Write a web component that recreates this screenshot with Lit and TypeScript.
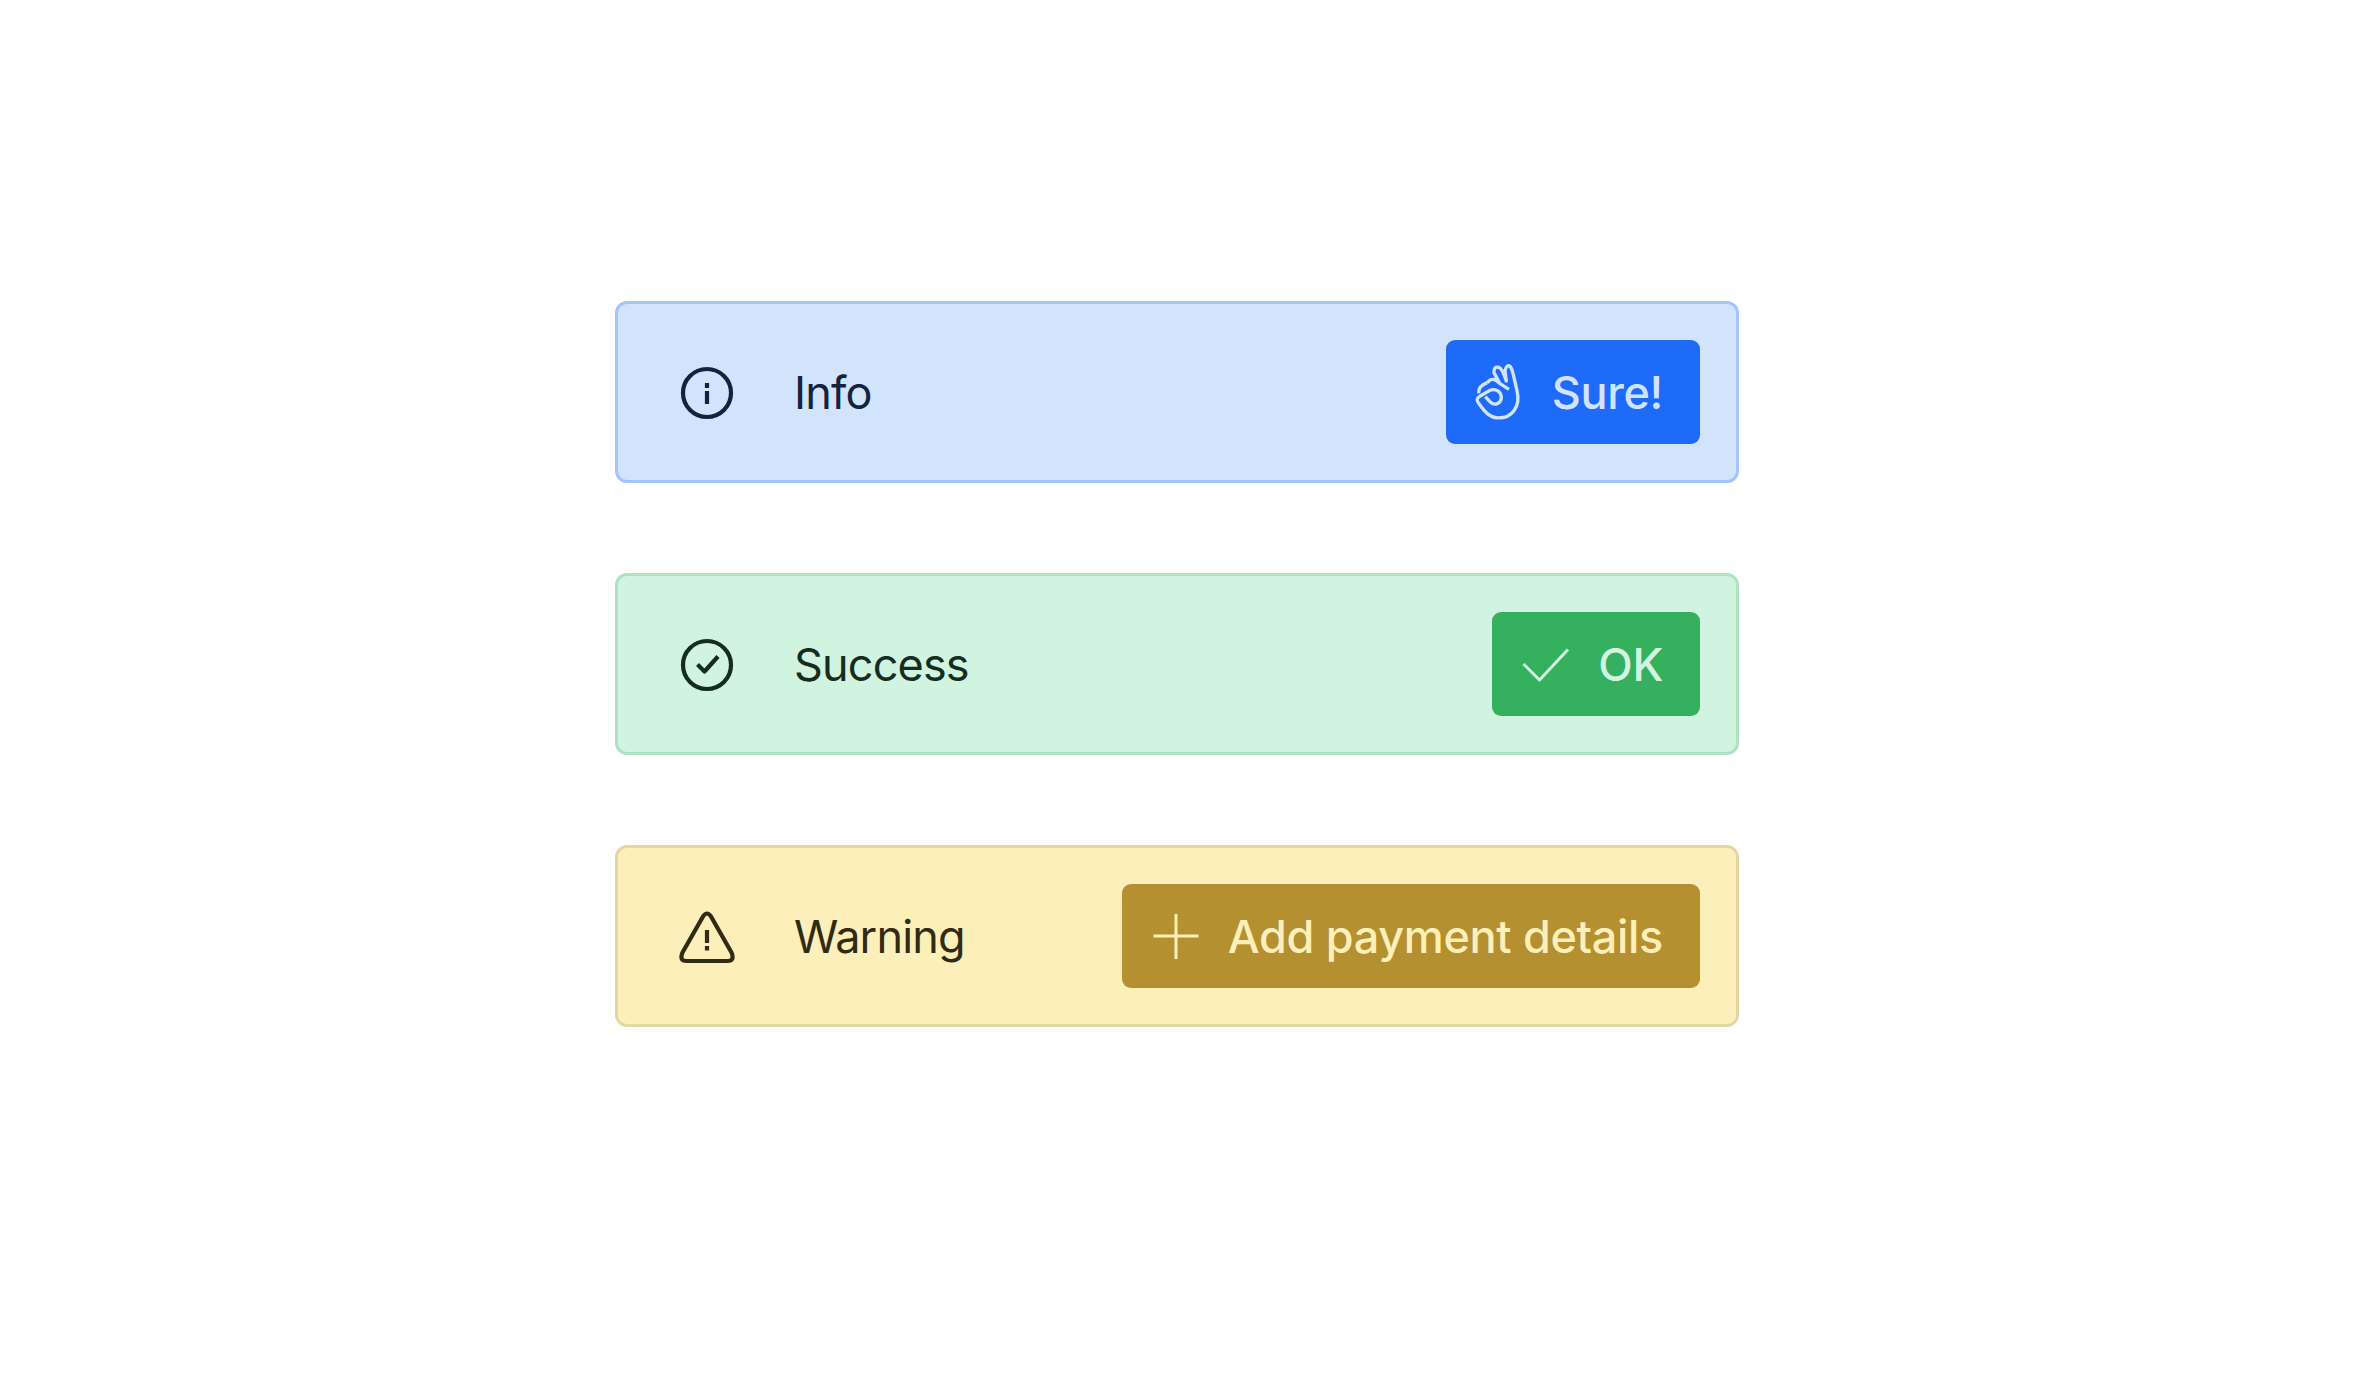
import { LitElement, html, css, svg } from "lit";
import { customElement } from "lit/decorators.js";

const icons = {
  info: svg`<circle cx="36" cy="36" r="24"/><path d="M36 34v13M36 26v5"/>`,
  success: svg`<circle cx="36" cy="36" r="24"/><path d="M26.5 35.500l7 7 13.500-15"/>`,
  warning: svg`<path d="M32 15.500 L11.500 51.500 Q8 60 15.500 60 H56.500 Q64 60 60.500 51.500 L40 15.500 Q36 9.500 32 15.500Z"/><path d="M36 29v13M36 45v4.500"/>`,
  check: svg`<path d="M13.500 36l16 16 28.500-30.500"/>`,
  plus: svg`<path d="M36 14v45M13.500 36h45"/>`,
  hand: svg`<g transform="translate(-33.700 -36.700) scale(.3333)">
    <path d="M171 190 Q186 170 208 192 L191 160 Q190 140 206 144 Q216 148 228 185 L224 155 Q229 133 240 142 Q245 148 250 170 L260 213 C272 262 245 296 205 296 C180 296 165 280 145 252 Q134 238 150 230 L172 217 C190 205 212 212 213 235 C213 250 195 262 180 248 Q172 240 165 232 M145 222 Q143 200 171 190 M208 192 L236 210"/>
  </g>`,
};

const rows = [
  { kind: "info", icon: icons.info, label: "Info", action: "Sure!", actionIcon: icons.hand },
  { kind: "success", icon: icons.success, label: "Success", action: "OK", actionIcon: icons.check },
  { kind: "warning", icon: icons.warning, label: "Warning", action: "Add payment details", actionIcon: icons.plus },
];

@customElement("app-root")
export class AppRoot extends LitElement {
  static styles = css`
    :host {
      display: block;
      min-height: 1382px;
      background: #fff;
      font-family: Inter, "Liberation Sans", sans-serif;
    }

    .stack {
      width: 1124px;
      margin: 0 auto;
      padding-top: 301px;
      display: flex;
      flex-direction: column;
      gap: 90px;
      transform: translateX(-1px);
    }

    .card {
      display: flex;
      align-items: center;
      box-sizing: border-box;
      height: 182px;
      padding: 36px 36px 36px 53px;
      border: 3px solid;
      border-radius: 12px;
      font-size: 45px;
    }

    .card > svg {
      position: relative;
      top: 1px;
      stroke-width: 4.2;
    }

    .label {
      margin-left: 51px;
      flex: 1;
      letter-spacing: -0.85px;
    }

    svg {
      display: block;
      width: 72px;
      height: 72px;
      flex: none;
      fill: none;
      stroke: currentColor;
      stroke-linecap: butt;
      stroke-linejoin: round;
    }

    .action svg {
      stroke-width: 3;
    }

    .action svg.hand {
      stroke-width: 10;
    }

    button {
      display: flex;
      align-items: center;
      gap: 16px;
      height: 104px;
      padding: 0 37px 0 18px;
      border: 0;
      border-radius: 9px;
      font: inherit;
      font-weight: 450;
      letter-spacing: -0.32px;
    }

    .info {
      background: #d2e3fc;
      border-color: #a3c5fb;
      color: #11233f;
    }
    .info button {
      background: #1f6bf9;
      color: #d2e3fc;
    }

    .success {
      background: #d1f4e0;
      border-color: #aee2c3;
      color: #142d20;
    }
    .success button {
      background: #34b05f;
      color: #d1f4e0;
    }

    .warning {
      background: #fcefb9;
      border-color: #e3d7a8;
      color: #312a14;
    }
    .warning button {
      background: #b59030;
      color: #fcefb9;
    }
  `;

  render() {
    return html`
      <div class="stack">
        ${rows.map(
          (r) => html`
            <div class="card ${r.kind}">
              <svg viewBox="0 0 72 72">${r.icon}</svg>
              <span class="label">${r.label}</span>
              <button class="action">
                <svg class=${r.kind === "info" ? "hand" : ""} viewBox="0 0 72 72">${r.actionIcon}</svg>
                <span>${r.action}</span>
              </button>
            </div>
          `
        )}
      </div>
    `;
  }
}
